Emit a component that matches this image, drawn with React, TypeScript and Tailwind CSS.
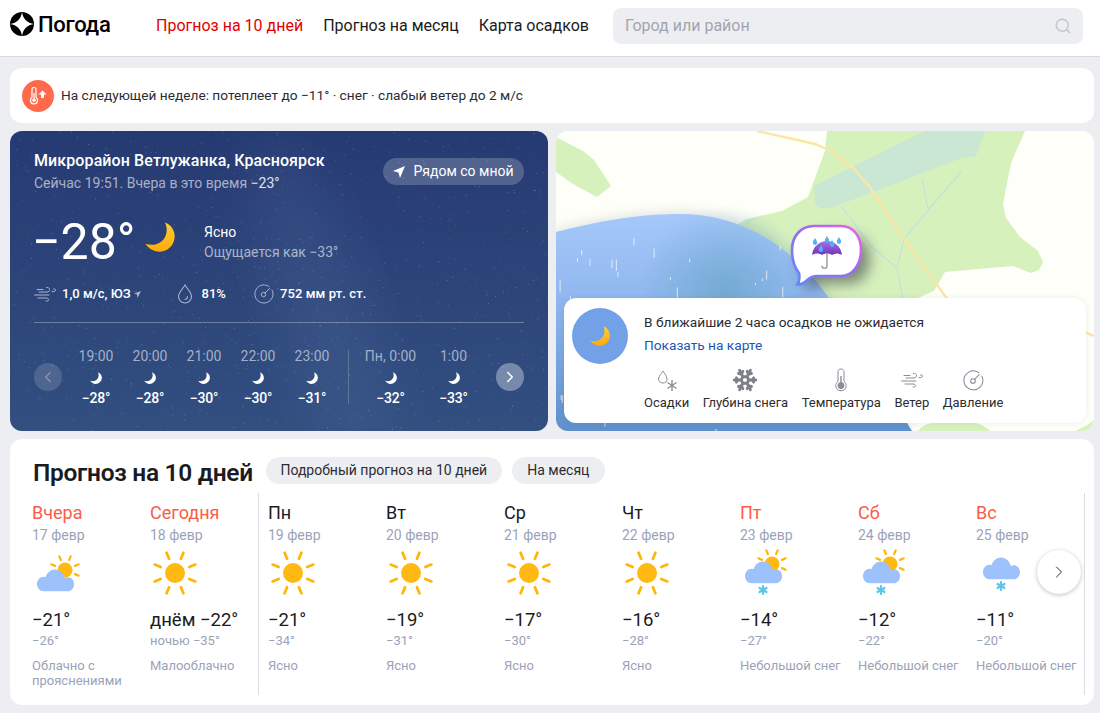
import { FC } from "react";
import { ChevronLeft, ChevronRight, Search, Snowflake } from "lucide-react";

interface Hour {
  time: string;
  temp: string;
}

interface Day {
  name: string;
  date: string;
  icon: "sun" | "partly" | "snowSun" | "snow";
  day: string;
  night: string;
  text: string;
  red?: boolean;
}

const hoursA: Hour[] = [
  { time: "19:00", temp: "−28°" },
  { time: "20:00", temp: "−28°" },
  { time: "21:00", temp: "−30°" },
  { time: "22:00", temp: "−30°" },
  { time: "23:00", temp: "−31°" },
];

const hoursB: Hour[] = [
  { time: "Пн, 0:00", temp: "−32°" },
  { time: "1:00", temp: "−33°" },
];

const daysA: Day[] = [
  { name: "Вчера", date: "17 февр", icon: "partly", day: "−21°", night: "−26°", text: "Облачно с прояснениями", red: true },
  { name: "Сегодня", date: "18 февр", icon: "sun", day: "днём −22°", night: "ночью −35°", text: "Малооблачно", red: true },
];

const daysB: Day[] = [
  { name: "Пн", date: "19 февр", icon: "sun", day: "−21°", night: "−34°", text: "Ясно" },
  { name: "Вт", date: "20 февр", icon: "sun", day: "−19°", night: "−31°", text: "Ясно" },
  { name: "Ср", date: "21 февр", icon: "sun", day: "−17°", night: "−30°", text: "Ясно" },
  { name: "Чт", date: "22 февр", icon: "sun", day: "−16°", night: "−28°", text: "Ясно" },
  { name: "Пт", date: "23 февр", icon: "snowSun", day: "−14°", night: "−27°", text: "Небольшой снег", red: true },
  { name: "Сб", date: "24 февр", icon: "snowSun", day: "−12°", night: "−22°", text: "Небольшой снег", red: true },
  { name: "Вс", date: "25 февр", icon: "snow", day: "−11°", night: "−20°", text: "Небольшой снег", red: true },
];

// deterministic star field for the night card
const stars = Array.from({ length: 1000 }, (_, i) => {
  const a = Math.sin(i * 12.9898) * 43758.5453;
  const b = Math.sin(i * 78.233) * 12543.1234;
  const c = Math.sin(i * 37.719) * 9631.77;
  return {
    x: (a - Math.floor(a)) * 538,
    y: (b - Math.floor(b)) * 300,
    o: 0.06 + (c - Math.floor(c)) * 0.28,
  };
});

const rain = Array.from({ length: 70 }, (_, i) => {
  const a = Math.sin(i * 3.17 + 1) * 9137.3;
  const b = Math.sin(i * 7.91 + 2) * 5171.9;
  const c = Math.sin(i * 5.33) * 2113.7;
  return {
    x: 558 + (a - Math.floor(a)) * 270,
    y: 222 + (b - Math.floor(b)) * 205,
    h: 2 + (c - Math.floor(c)) * 13,
  };
});

const Moon: FC<{ size: number; white?: boolean }> = ({ size, white }) => (
  <svg width={size} height={size} viewBox="0 0 30 30">
    <defs>
      <linearGradient id="moonGold" x1="0" y1="0" x2="0" y2="1">
        <stop offset="0" stopColor="#ffd02e" />
        <stop offset="1" stopColor="#ffa90a" />
      </linearGradient>
    </defs>
    <path
      d="M20 0.5C27 3 30.5 10 29.5 16.5C28.3 24.5 21.5 30 14 29.8C8.5 29.6 3.5 26.5 0.5 21.8C8 24.5 16 22 19.8 15.5C22.3 11 22.3 5 20 0.5Z"
      fill={white ? "#ffffff" : "url(#moonGold)"}
    />
  </svg>
);

const Sun: FC<{ cx?: number; cy?: number; r?: number; inner?: number; outer?: number; w?: number }> = ({
  cx = 24,
  cy = 24,
  r = 10,
  inner = 15.5,
  outer = 22,
  w = 2.8,
}) => (
  <g>
    {[22.5, 67.5, 112.5, 157.5, 202.5, 247.5, 292.5, 337.5].map((deg) => {
      const t = (deg * Math.PI) / 180;
      return (
        <line
          key={deg}
          x1={cx + Math.cos(t) * inner}
          y1={cy + Math.sin(t) * inner}
          x2={cx + Math.cos(t) * outer}
          y2={cy + Math.sin(t) * outer}
          stroke="#ffb60a"
          strokeWidth={w}
          strokeLinecap="round"
        />
      );
    })}
    <circle cx={cx} cy={cy} r={r} fill="#ffb912" />
  </g>
);

const Cloud: FC<{ dx?: number; dy?: number }> = ({ dx = 0, dy = 0 }) => (
  <path
    transform={`translate(${dx} ${dy - 2.2}) scale(1 1.12)`}
    d="M8 38C3.5 38 1 34.8 1 31.5C1 28 3.8 25 7.5 25C8.3 25 9 25.1 9.6 25.3C11 21.3 14.6 18.5 19 18.5C23.8 18.5 27.8 21.8 28.9 26.2C29.8 25.7 30.8 25.5 31.8 25.5C35.5 25.5 38 28.3 38 31.7C38 35.2 35.3 38 31.5 38Z"
    fill="#9dc1fa"
  />
);

const Flake: FC<{ cx: number; cy: number }> = ({ cx, cy }) => (
  <g stroke="#5cc6e8" strokeWidth="2.2" strokeLinecap="round">
    <line x1={cx} y1={cy - 4} x2={cx} y2={cy + 4} />
    <line x1={cx - 3.5} y1={cy - 2} x2={cx + 3.5} y2={cy + 2} />
    <line x1={cx - 3.5} y1={cy + 2} x2={cx + 3.5} y2={cy - 2} />
  </g>
);

const DayIcon: FC<{ kind: Day["icon"] }> = ({ kind }) => (
  <svg width="48" height="48" viewBox="0 0 48 48">
    {kind === "sun" && <Sun />}
    {kind === "partly" && (
      <>
        <Sun cx={32} cy={21} r={7.5} inner={10.8} outer={14.8} w={2.2} />
        <Cloud dx={3} dy={2} />
      </>
    )}
    {kind === "snowSun" && (
      <>
        <Sun cx={31} cy={15} r={7.5} inner={10.8} outer={14.8} w={2.2} />
        <Cloud dx={3} dy={-6} />
        <Flake cx={22} cy={41} />
      </>
    )}
    {kind === "snow" && (
      <>
        <Cloud dx={5} dy={-10} />
        <Flake cx={24} cy={37} />
      </>
    )}
  </svg>
);

const WindIcon: FC<{ color: string }> = ({ color }) => (
  <svg width="22" height="16" viewBox="0 0 22 16" fill="none" stroke={color} strokeWidth="1" strokeLinecap="round">
    <path d="M5 6H13C15 6 15.5 4.5 15.5 3.5C15.5 2 14 1 12.5 1.5" />
    <path d="M0.5 9H15" />
    <path d="M4 12H12C14 12 14.8 13 14.5 14C14.2 15 13 15.5 12 15" />
    <path d="M18 5.5C20 6 21.5 5.5 21.5 4C21.5 3 20.5 2.5 19.5 3" />
    <path d="M3 3.5H9" />
  </svg>
);

const DropIcon: FC = () => (
  <svg width="16" height="20" viewBox="0 0 16 20" fill="none" stroke="#aab4cc" strokeWidth="1.1">
    <path d="M8 1C6 4.5 1.5 8.5 1.5 12.5C1.5 16.2 4.5 19 8 19C11.5 19 14.5 16.2 14.5 12.5C14.5 8.5 10 4.5 8 1Z" />
    <path d="M10.5 12.5C10.5 14 9.5 15.2 8 15.5" strokeLinecap="round" />
  </svg>
);

const PressureIcon: FC<{ color: string; size: number }> = ({ color, size }) => (
  <svg width={size} height={size} viewBox="0 0 20 20" fill="none" stroke={color} strokeWidth="1">
    <path d="M15 2.5C12.5 0.8 8.5 0.2 5.5 2C2 4 0.5 8 1 11.5C1.6 15.8 5.5 19 10 19C14.8 19 19 15 19 10C19 8.5 18.6 7 18 6" strokeLinecap="round" />
    <circle cx="9.5" cy="10.5" r="2.2" />
    <path d="M11 9L15.5 4.5" strokeLinecap="round" />
  </svg>
);

const Umbrella: FC = () => (
  <g>
    <defs>
      <linearGradient id="umb" x1="0" y1="0" x2="0" y2="1">
        <stop offset="0" stopColor="#b06cf0" />
        <stop offset="1" stopColor="#6a35b8" />
      </linearGradient>
    </defs>
    <path d="M812 255C813 246 820 241 827 241C834 241 841 246 842 255C838 253 835 253 832 255C829 253 825 253 822 255C819 253 815 253 812 255Z" fill="url(#umb)" />
    <path d="M827 253V266C827 269 822 269 822 266" fill="none" stroke="#8a8a8a" strokeWidth="1.2" strokeLinecap="round" />
    {[
      [815, 242],
      [821, 249],
      [827, 240],
      [832, 244],
      [839, 241],
    ].map(([x, y]) => (
      <path key={`${x}-${y}`} d={`M${x} ${y - 4}C${x - 1} ${y - 2} ${x - 2.2} ${y - 1} ${x - 2.2} ${y + 0.5}C${x - 2.2} ${y + 2} ${x - 1} ${y + 3} ${x} ${y + 3}C${x + 1} ${y + 3} ${x + 2.2} ${y + 2} ${x + 2.2} ${y + 0.5}C${x + 2.2} ${y - 1} ${x + 1} ${y - 2} ${x} ${y - 4}Z`} fill="#4fb4ee" />
    ))}
  </g>
);

const blobPath = "M556 232C610 218 650 214 680 214C745 214 800 250 838 312L912 431H556Z";

const MapDrawing: FC = () => (
  <svg className="absolute inset-0" width="538" height="300" viewBox="556 131 538 300">
    <defs>
      <linearGradient id="blob" x1="0" y1="0" x2="0" y2="1">
        <stop offset="0" stopColor="#a6c8fa" />
        <stop offset="0.4" stopColor="#8fb7ee" />
        <stop offset="1" stopColor="#5f90cc" />
      </linearGradient>
      <radialGradient id="blobInner">
        <stop offset="0" stopColor="#6ea8ce" stopOpacity="0.85" />
        <stop offset="1" stopColor="#6ea8ce" stopOpacity="0" />
      </radialGradient>
      <linearGradient id="bubble" x1="0" y1="1" x2="1" y2="0">
        <stop offset="0" stopColor="#5d8cf8" />
        <stop offset="0.55" stopColor="#9a6bf4" />
        <stop offset="1" stopColor="#f060ec" />
      </linearGradient>
      <filter id="soft" x="-30%" y="-30%" width="160%" height="160%">
        <feGaussianBlur stdDeviation="7" />
      </filter>
    </defs>
    <rect x="556" y="131" width="538" height="300" fill="#fefff8" />
    <path d="M556 137L583 151L594 160L611 186L597 197L573 184L556 172Z" fill="#d7f1bd" />
    <path d="M827 131L825 151L808 197L782 211L746 219L650 280L830 431H904V304L934 291L945 272L1013 266L1031 273L1039 270L1043 262L1038 251L1020 237L1006 218L1003 204L1011 163L1025 131Z" fill="#d7f1bd" />
    <path d="M918 431C924 423 935 421 955 421C975 421 985 425 990 431Z" fill="#d7f1bd" />
    <path d="M1094 420C1088 425 1082 428 1075 431H1094Z" fill="#d7f1bd" />
    <path d="M924 131H985L976 156L962 158L831 208L820 208L815 204L814 186Z" fill="#c9e7d3" />
    <g fill="none" stroke="#bfe3dc" strokeWidth="1.2">
      <path d="M961 172L929 209L904 239L897 268L904 304" />
      <path d="M922 179L928 209" />
      <path d="M842 207L871 246L897 268" />
      <path d="M755 218L746 224" />
    </g>
    <path d="M757 131L815 144L831 151L852 167L869 186L904 239L953 307C970 304 985 304 1000 307C1040 318 1070 325 1094 336" fill="none" stroke="#fbe6a6" strokeWidth="2.4" />
    <path d={blobPath} fill="#8a93a0" opacity="0.35" filter="url(#soft)" />
    <path d={blobPath} fill="url(#blob)" />
    <circle cx="725" cy="290" r="85" fill="url(#blobInner)" />
    <g stroke="#ffffff" strokeWidth="1" opacity="0.7">
      {rain.map((r, i) => (
        <line key={i} x1={r.x} y1={r.y + 14} x2={r.x} y2={r.y + 14 + r.h} />
      ))}
    </g>
    <path d="M814 228H842C855 228 862 238 862 250C862 265 854 276 842 276H814C810 276 806 279 803 282C801 284 799 284 797 284L799 276C795 272 792 262 792 250C792 238 800 228 814 228Z" fill="#30363f" opacity="0.55" filter="url(#soft)" transform="translate(8 8)" />
    <path d="M814 226H841C853 226 861 236 861 250C861 264 853 276 841 276H816C811 276 808 279 805 282C803 284 800 284.5 797.5 284.5C799 282 800 278 799 273C795 268 792 259 792 250C792 236 801 226 814 226Z" fill="#ffffff" stroke="url(#bubble)" strokeWidth="2.6" />
    <Umbrella />
  </svg>
);

const HourCell: FC<{ hour: Hour; wide?: boolean }> = ({ hour, wide }) => (
  <div className={`flex flex-col items-center ${wide ? "w-[63px]" : "w-[54px]"}`}>
    <span className="text-[14px] leading-[18px] text-[#c3cbdc]/80">{hour.time}</span>
    <span className="mt-[7px] mb-[5px] flex h-[12px] items-center">
      <Moon size={12} white />
    </span>
    <span className="text-[14px] leading-[18px] font-medium tracking-[-0.2px] text-white">{hour.temp}</span>
  </div>
);

const DayCell: FC<{ day: Day }> = ({ day }) => (
  <div className="w-[118px] shrink-0 pt-[9px] pr-1">
    <div className={`text-[18px] leading-[22px] ${day.red ? "text-[#fc5c45]" : "text-[#1a1b22]"}`}>{day.name}</div>
    <div className="mt-[1px] text-[14px] leading-[20px] text-[#9ba3b8]">{day.date}</div>
    <div className="mt-[4px] ml-[1px]">
      <DayIcon kind={day.icon} />
    </div>
    <div className="mt-[11px] text-[18.5px] leading-[24px] whitespace-nowrap text-[#1a1b22]">{day.day}</div>
    <div className="text-[13px] leading-[17px] whitespace-nowrap text-[#9ba3b8]">{day.night}</div>
    <div className="mt-[9px] text-[13px] leading-[15px] text-[#9ba3b8]">{day.text}</div>
  </div>
);

const MapLayer: FC<{ label: string; children: React.ReactNode }> = ({ label, children }) => (
  <div className="flex flex-col items-center">
    <div className="flex h-[28px] items-center justify-center">{children}</div>
    <span className="text-[13px] leading-[18px] text-[#2b2c33]">{label}</span>
  </div>
);

const App: FC = () => {
  return (
    <div className="h-[713px] w-[1100px] overflow-hidden bg-[#edeef2] font-[Roboto,sans-serif] text-[#1a1b22]">
      <header className="flex h-[57px] items-center border-b border-[#d9dae0] bg-white pr-[17px] pb-[4px] pl-[10px]">
        <svg width="24" height="24" viewBox="0 0 24 24" className="mb-[4px]">
          <circle cx="12" cy="12" r="12" fill="#000000" />
          <path d="M12 0C13 7 17 11 24 12C17 13 13 17 12 24C11 17 7 13 0 12C7 11 11 7 12 0Z" fill="#ffffff" />
        </svg>
        <span className="mb-[4px] ml-[4px] w-[118px] text-[22px] font-medium tracking-[-0.3px] text-black">Погода</span>
        <nav className="flex gap-[20px] text-[16px]">
          <span className="text-[#e30000]">Прогноз на 10 дней</span>
          <span>Прогноз на месяц</span>
          <span>Карта осадков</span>
        </nav>
        <div className="ml-auto flex h-[36px] w-[470px] items-center justify-between rounded-lg bg-[#edeef2] pr-[11px] pl-[12px]">
          <span className="text-[16px] text-[#a2a5b0]">Город или район</span>
          <Search size={18} color="#c3c6cf" />
        </div>
      </header>

      <main className="flex flex-col gap-[8px] px-[10px] pt-[11px] pr-[6px]">
        <section className="flex h-[55px] items-center gap-[7px] rounded-xl bg-white pl-[12px]">
          <span className="flex h-[32px] w-[32px] items-center justify-center rounded-full bg-[#ff6a4d]">
            <svg width="18" height="20" viewBox="0 0 18 20" fill="none">
              <path d="M3 3.5C3 2.2 4 1.5 5 1.5C6 1.5 7 2.2 7 3.5V11.2C8 12 8.5 13 8.5 14.2C8.5 16.2 7 17.8 5 17.8C3 17.8 1.5 16.2 1.5 14.2C1.5 13 2 12 3 11.2Z" stroke="#ffffff" strokeWidth="1.2" />
              <circle cx="5" cy="14.2" r="1.8" fill="#ffffff" />
              <path d="M5 7V13" stroke="#ffffff" strokeWidth="1.2" />
              <path d="M13.5 4.5L17.5 8.5H15V12H12V8.5H9.5Z" fill="#ffffff" />
            </svg>
          </span>
          <span className="text-[13.7px] text-[#2b2c33]">На следующей неделе: потеплеет до −11° · снег · слабый ветер до 2 м/с</span>
        </section>

        <div className="flex h-[300px] gap-[8px]">
          <section className="relative w-[538px] overflow-hidden rounded-xl bg-gradient-to-b from-[#263a72] to-[#324f80] px-[24px] pt-[20px] text-white">
            <svg className="absolute inset-0" width="538" height="300" viewBox="0 0 538 300">
              <defs>
                <filter id="nebula" x="-30%" y="-30%" width="160%" height="160%">
                  <feGaussianBlur stdDeviation="28" />
                </filter>
              </defs>
              <ellipse cx="310" cy="170" rx="45" ry="170" fill="#5a74a8" opacity="0.22" transform="rotate(-18 310 170)" filter="url(#nebula)" />
              {stars.map((s, i) => (
                <circle key={i} cx={s.x} cy={s.y} r="0.5" fill="#ffffff" opacity={s.o} />
              ))}
            </svg>
            <div className="relative">
              <div className="flex items-start justify-between">
                <div>
                  <h2 className="text-[16px] leading-[20px] font-medium tracking-[0.1px]">Микрорайон Ветлужанка, Красноярск</h2>
                  <p className="mt-[2px] text-[14px] leading-[20px] text-white/60">
                    Сейчас 19:51. Вчера в это время <span className="text-white/85">−23°</span>
                  </p>
                </div>
                <span className="mt-[7px] flex h-[27px] w-[141px] items-center justify-center gap-[8px] rounded-full bg-white/20 text-[14px]">
                  <svg width="12" height="12" viewBox="0 0 12 12">
                    <path d="M12 0L7 12L5.4 6.6L0 5Z" fill="#ffffff" />
                  </svg>
                  Рядом со мной
                </span>
              </div>

              <div className="mt-[18px] flex h-[58px] items-center">
                <span className="mt-[4px] -ml-[2px] w-[113px] text-[50px] leading-[58px] whitespace-nowrap">−28°</span>
                <span className="mb-[6px]">
                  <Moon size={30} />
                </span>
                <div className="mt-[4px] ml-[29px]">
                  <div className="text-[14px] leading-[20px]">Ясно</div>
                  <div className="text-[14px] leading-[20px] text-white/60">Ощущается как −33°</div>
                </div>
              </div>

              <div className="mt-[13px] flex h-[24px] items-center text-[13px] font-medium">
                <WindIcon color="#aab4cc" />
                <span className="ml-[6px] flex items-center gap-[3px]">
                  1,0 м/с, ЮЗ
                  <svg width="7" height="7" viewBox="0 0 7 7">
                    <path d="M7 0L3 1.5L0 2.5L3 3.5L3.5 7Z" fill="#aab4cc" />
                  </svg>
                </span>
                <span className="ml-[36px]">
                  <DropIcon />
                </span>
                <span className="ml-[9px]">81%</span>
                <span className="ml-[28px]">
                  <PressureIcon color="#aab4cc" size={20} />
                </span>
                <span className="ml-[6px] tracking-[0.1px]">752 мм рт. ст.</span>
              </div>

              <div className="mt-[16px] h-px bg-white/30" />

              <div className="mt-[24px] flex items-center">
                <span className="flex h-[28px] w-[28px] items-center justify-center rounded-full bg-white/15 text-white/30">
                  <ChevronLeft size={18} />
                </span>
                <div className="ml-[7px] flex">
                  {hoursA.map((h) => (
                    <HourCell key={h.time} hour={h} />
                  ))}
                </div>
                <div className="mr-[10px] ml-[9px] h-[54px] w-px bg-white/20" />
                <div className="flex">
                  {hoursB.map((h) => (
                    <HourCell key={h.time} hour={h} wide />
                  ))}
                </div>
                <span className="ml-auto flex h-[28px] w-[28px] items-center justify-center rounded-full bg-white/35 text-white">
                  <ChevronRight size={18} />
                </span>
              </div>
            </div>
          </section>

          <section className="relative w-[538px] overflow-hidden rounded-xl bg-[#fefff8]">
            <MapDrawing />
            <div className="absolute top-[167px] right-[8px] left-[8px] flex h-[125px] gap-[16px] rounded-xl bg-white pt-[10px] pl-[8px] shadow-[0_0_6px_rgba(0,0,0,0.08)]">
              <span className="flex h-[56px] w-[56px] shrink-0 items-center justify-center rounded-full bg-[#73a1e8]">
                <Moon size={20} />
              </span>
              <div className="pt-[4px]">
                <p className="text-[13.7px] leading-[20px] text-[#2b2c33]">В ближайшие 2 часа осадков не ожидается</p>
                <p className="mt-[3px] text-[13.7px] leading-[20px] text-[#1b56b8]">Показать на карте</p>
                <div className="mt-[11px] flex gap-[13.5px]">
                  <MapLayer label="Осадки">
                    <svg width="24" height="24" viewBox="0 0 24 24" fill="none" stroke="#8a8d96" strokeWidth="1">
                      <path d="M8 3C7 5 3.5 8 3.5 11C3.5 13.5 5.5 15 8 15C10.5 15 12 13.5 12 11C12 8 9 5 8 3Z" />
                      <path d="M17 12V23M12.5 14.5L21.5 20.5M12.5 20.5L21.5 14.5" strokeWidth="1.4" />
                    </svg>
                  </MapLayer>
                  <MapLayer label="Глубина снега">
                    <Snowflake size={26} color="#7e818b" strokeWidth={2.6} />
                  </MapLayer>
                  <MapLayer label="Температура">
                    <svg width="16" height="24" viewBox="0 0 16 24" fill="none" stroke="#8a8d96" strokeWidth="1">
                      <path d="M5 3.5C5 2 6.3 1 8 1C9.7 1 11 2 11 3.5V13.5C12.5 14.6 13.2 16 13.2 17.6C13.2 20.6 10.9 22.8 8 22.8C5.1 22.8 2.8 20.6 2.8 17.6C2.8 16 3.5 14.6 5 13.5Z" />
                      <circle cx="8" cy="17.6" r="3" fill="#8a8d96" />
                      <path d="M8 8V15" strokeWidth="1.4" />
                    </svg>
                  </MapLayer>
                  <MapLayer label="Ветер">
                    <WindIcon color="#8a8d96" />
                  </MapLayer>
                  <MapLayer label="Давление">
                    <PressureIcon color="#8a8d96" size={21} />
                  </MapLayer>
                </div>
              </div>
            </div>
          </section>
        </div>

        <section className="relative h-[266px] rounded-xl bg-white pt-[19px] pl-[22px]">
          <div className="flex h-[30px] items-center gap-[12px]">
            <h2 className="ml-[1px] mr-[1px] text-[24.5px] font-semibold tracking-[-0.3px] text-[#1a1b22]">Прогноз на 10 дней</h2>
            <span className="mb-[6px] flex h-[27px] w-[236px] items-center justify-center rounded-full bg-[#edeef2] text-[14px] text-[#2b2c33]">
              Подробный прогноз на 10 дней
            </span>
            <span className="-ml-[2px] mb-[6px] flex h-[27px] w-[93px] items-center justify-center rounded-full bg-[#edeef2] text-[14px] text-[#2b2c33]">
              На месяц
            </span>
          </div>
          <div className="mt-[5px] flex h-[202px]">
            {daysA.map((d) => (
              <DayCell key={d.name} day={d} />
            ))}
            <div className="mr-[9px] -ml-[10px] h-full w-px shrink-0 bg-[#dcdde3]" />
            {daysB.map((d) => (
              <DayCell key={d.name} day={d} />
            ))}
          </div>
          <div className="absolute top-[54px] right-[9px] h-[202px] w-px bg-[#dcdde3]" />
          <span className="absolute top-[111px] right-[13px] flex h-[44px] w-[44px] items-center justify-center rounded-full bg-white text-[#2b2c33] shadow-[0_1px_4px_rgba(0,0,0,0.25)]">
            <ChevronRight size={20} strokeWidth={1.2} />
          </span>
        </section>
      </main>
    </div>
  );
};

export default App;
